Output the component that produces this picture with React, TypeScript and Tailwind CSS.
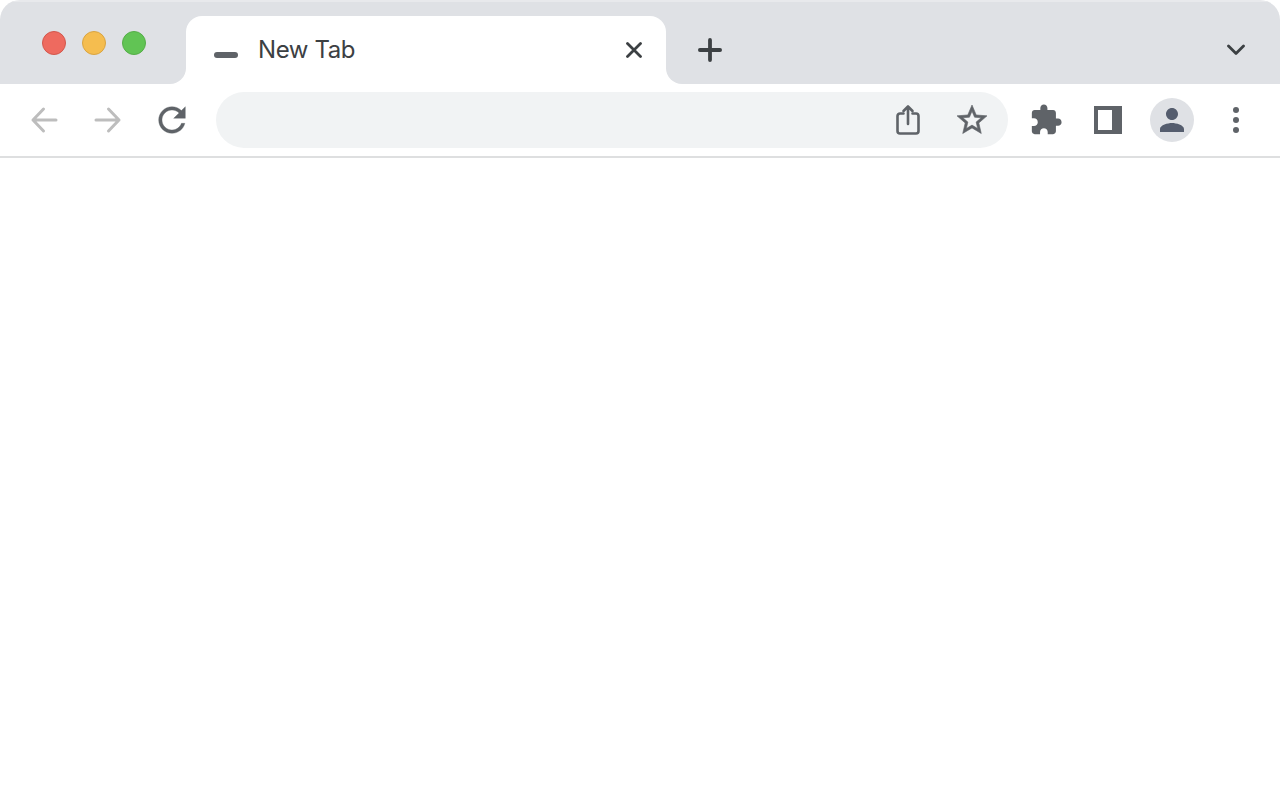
function Light({ className }: { className: string }) {
  return <div className={`h-6 w-6 rounded-full border ${className}`} />
}

function BackIcon() {
  return (
    <svg width="28" height="28" viewBox="0 0 28 28" fill="none" stroke="#bdbdbd" strokeWidth="3" strokeLinecap="round" strokeLinejoin="round">
      <path d="M26 14H3M13.500 3 3 14l10.500 11" />
    </svg>
  )
}

function ForwardIcon() {
  return (
    <svg width="28" height="28" viewBox="0 0 28 28" fill="none" stroke="#bdbdbd" strokeWidth="3" strokeLinecap="round" strokeLinejoin="round">
      <path d="M2 14h23M14.500 3 25 14 14.500 25" />
    </svg>
  )
}

function ReloadIcon() {
  return (
    <svg width="40" height="40" viewBox="0 0 24 24" fill="#5f6368" stroke="#5f6368" strokeWidth="0.2">
      <path d="M17.65 6.35C16.2 4.9 14.21 4 12 4c-4.42 0-7.99 3.58-7.99 8s3.57 8 7.99 8c3.73 0 6.84-2.55 7.73-6h-2.08c-.82 2.33-3.04 4-5.65 4-3.31 0-6-2.69-6-6s2.69-6 6-6c1.66 0 3.14.69 4.22 1.78L13 11h7V4l-2.35 2.35z" />
    </svg>
  )
}

function ShareIcon() {
  return (
    <svg width="24" height="32" viewBox="0 0 24 32" fill="none" stroke="#5f6368" strokeWidth="2.6" strokeLinecap="round" strokeLinejoin="round">
      <path d="M7.500 9.500H4a2.500 2.500 0 0 0-2.500 2.500v15A2.500 2.500 0 0 0 4 29.500h16a2.500 2.500 0 0 0 2.500-2.500V12A2.500 2.500 0 0 0 20 9.500h-3.500" />
      <path d="M12 20V2.500M7.500 7 12 2.500 16.500 7" />
    </svg>
  )
}

function StarIcon() {
  return (
    <svg width="36" height="36" viewBox="0 0 24 24" fill="#5f6368" stroke="#5f6368" strokeWidth="0.4">
      <path d="M22 9.24l-7.19-.62L12 2 9.19 8.63 2 9.24l5.46 4.73L5.82 21 12 17.27 18.18 21l-1.63-7.03L22 9.24zM12 15.4l-3.76 2.27 1-4.28-3.32-2.88 4.38-.38L12 6.1l1.71 4.04 4.38.38-3.32 2.88 1 4.28L12 15.4z" />
    </svg>
  )
}

function PuzzleIcon() {
  return (
    <svg width="34" height="34" viewBox="0 0 24 24" fill="#5f6368">
      <path d="M20.5 11H19V7c0-1.1-.9-2-2-2h-4V3.5C13 2.12 11.88 1 10.5 1S8 2.12 8 3.5V5H4c-1.1 0-1.99.9-1.99 2v3.8H3.5c1.49 0 2.7 1.21 2.7 2.7s-1.21 2.7-2.7 2.7H2V20c0 1.1.9 2 2 2h3.8v-1.500c0-1.49 1.21-2.7 2.7-2.7 1.49 0 2.7 1.21 2.7 2.700V22H17c1.100 0 2-.9 2-2v-4h1.500c1.380 0 2.500-1.120 2.500-2.500S21.880 11 20.500 11z" />
    </svg>
  )
}

function PanelIcon() {
  return (
    <svg width="28" height="28" viewBox="0 0 28 28">
      <path fill="#5f6368" d="M0 0h28v28H0z" />
      <path fill="#fff" d="M4 4h14v20H4z" />
    </svg>
  )
}

function PersonIcon() {
  return (
    <svg width="36" height="36" viewBox="0 0 24 24" fill="#555d6e">
      <path d="M12 12c2.21 0 4-1.790 4-4s-1.790-4-4-4-4 1.790-4 4 1.790 4 4 4zm0 2c-2.670 0-8 1.340-8 4v2h16v-2c0-2.660-5.330-4-8-4z" />
    </svg>
  )
}

export default function App() {
  return (
    <div className="min-h-[800px] bg-white font-['Inter',sans-serif]">
      <div className="overflow-hidden rounded-t-[20px]">
        {/* tab strip */}
        <div className="flex h-[84px] bg-white">
          <div className="flex w-[186px] gap-4 rounded-br-2xl border-t-2 border-[#e8e9ec] bg-[#dfe1e5] pl-[42px] pt-[29px]">
            <Light className="border-[#d2574c] bg-[#ee6a5f]" />
            <Light className="border-[#d9a441] bg-[#f5bd4f]" />
            <Light className="border-[#55ad48] bg-[#61c454]" />
          </div>

          <div className="w-[480px] border-t-2 border-[#e8e9ec] bg-[#dfe1e5] pt-[14px]">
            <div className="flex h-[68px] items-center rounded-t-2xl bg-white pl-7 pr-6">
              <div className="mt-[10px] h-1.5 w-6 rounded-full bg-[#5f6368]" />
              <span className="ml-5 text-2xl tracking-[-0.4px] text-[#3c4043]">New Tab</span>
              <svg className="ml-auto" width="16" height="16" viewBox="0 0 16 16" fill="none" stroke="#3c4043" strokeWidth="2.8" strokeLinecap="round">
                <path d="M1.500 1.500l13 13M14.500 1.500l-13 13" />
              </svg>
            </div>
          </div>

          <div className="flex flex-1 items-center rounded-bl-2xl border-t-2 border-[#e8e9ec] bg-[#dfe1e5] pl-8 pr-[35px] pt-[14px]">
            <svg width="24" height="24" viewBox="0 0 24 24" fill="none" stroke="#3c4043" strokeWidth="3.800" strokeLinecap="round">
              <path d="M12 1.900v20.200M1.900 12h20.200" />
            </svg>
            <svg className="ml-auto" width="18" height="12" viewBox="0 0 18 12" fill="none" stroke="#3c4043" strokeWidth="2.800" strokeLinecap="round" strokeLinejoin="round">
              <path d="M1.500 2 9 9.500 16.500 2" />
            </svg>
          </div>
        </div>

        {/* toolbar */}
        <div className="flex h-[74px] items-center border-b-2 border-[#dedfe0] bg-white pl-3">
          <div className="flex h-10 w-16 items-center justify-center"><BackIcon /></div>
          <div className="flex h-10 w-16 items-center justify-center"><ForwardIcon /></div>
          <div className="flex h-10 w-16 items-center justify-center"><ReloadIcon /></div>

          <div className="ml-3 flex h-14 w-[792px] items-center justify-end rounded-full bg-[#f1f3f4] pr-1">
            <div className="flex w-16 items-center justify-center"><ShareIcon /></div>
            <div className="flex w-16 items-center justify-center"><StarIcon /></div>
          </div>

          <div className="ml-1.5 flex w-16 items-center justify-center"><PuzzleIcon /></div>
          <div className="flex w-[60px] items-center justify-center"><PanelIcon /></div>
          <div className="flex w-[68px] items-center justify-center">
            <div className="flex h-11 w-11 items-center justify-center rounded-full bg-[#dfe1e5]"><PersonIcon /></div>
          </div>
          <div className="flex w-[60px] flex-col items-center gap-1">
            <div className="h-1.5 w-1.5 rounded-full bg-[#5f6368]" />
            <div className="h-1.5 w-1.5 rounded-full bg-[#5f6368]" />
            <div className="h-1.5 w-1.5 rounded-full bg-[#5f6368]" />
          </div>
        </div>
      </div>
    </div>
  )
}
